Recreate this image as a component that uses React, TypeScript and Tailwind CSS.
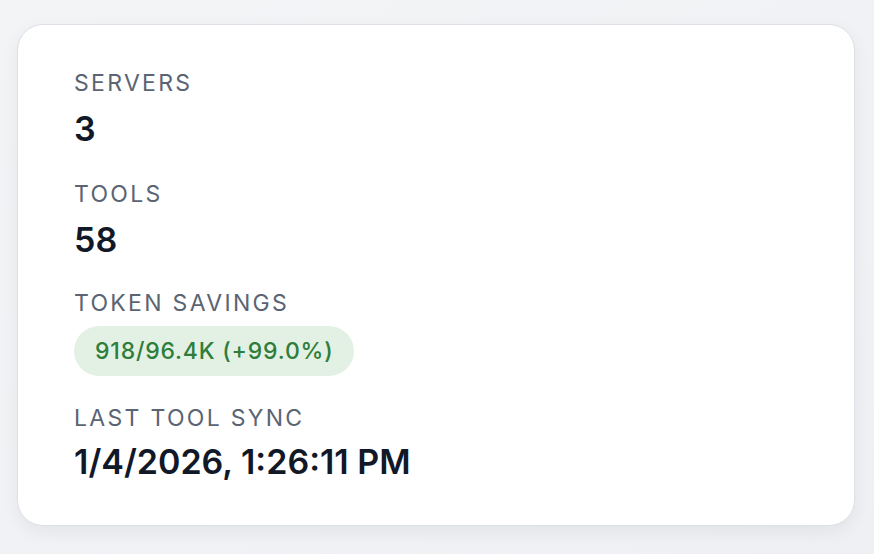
import React from "react";

function Label({ children }: { children: React.ReactNode }) {
  return (
    <div className="text-[23px] leading-[28px] tracking-[0.1em] text-[#5b6472] uppercase">
      {children}
    </div>
  );
}

function Value({ children }: { children: React.ReactNode }) {
  return (
    <div className="text-[34px] leading-[44px] font-semibold text-[#111827]">
      {children}
    </div>
  );
}

export default function App() {
  return (
    <div
      className="w-[874px] h-[554px] bg-gradient-to-br from-[#f3f4f6] to-[#eef0f3] pt-[24px] pl-[17px] overflow-hidden"
      style={{ fontFamily: "Inter, 'Noto Sans', sans-serif" }}
    >
      <div className="w-[838px] h-[502px] bg-white rounded-[26px] border border-[#dde0e6] shadow-[0_6px_18px_rgba(15,23,42,0.06)] pl-[56px] pt-[44px] flex flex-col">
        <div className="flex flex-col gap-[10px]">
          <Label>Servers</Label>
          <Value>3</Value>
        </div>
        <div className="flex flex-col gap-[10px] mt-[29px]">
          <Label>Tools</Label>
          <Value>58</Value>
        </div>
        <div className="flex flex-col gap-[9px] mt-[27px] items-start">
          <Label>Token Savings</Label>
          <div className="h-[50px] px-[21px] rounded-full bg-[#e3f1e4] text-[#2f7d3a] text-[23px] font-medium flex items-center tracking-[0.035em]">
            918/96.4K (+99.0%)
          </div>
        </div>
        <div className="flex flex-col gap-[8px] mt-[28px]">
          <Label>Last Tool Sync</Label>
          <Value>1/4/2026, 1:26:11 PM</Value>
        </div>
      </div>
    </div>
  );
}
